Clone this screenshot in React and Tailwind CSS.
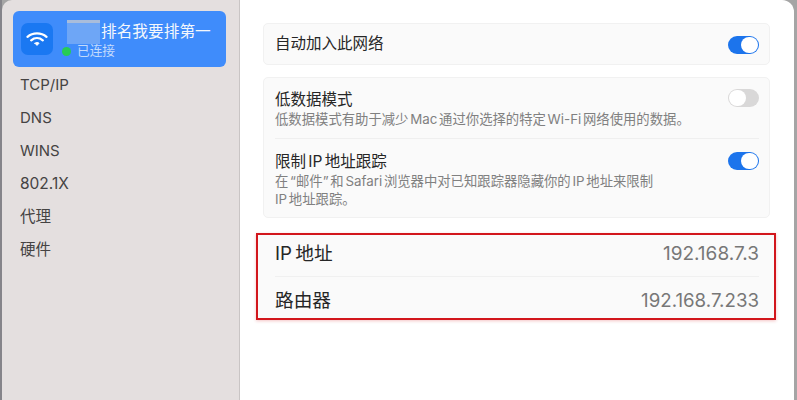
const cjk = "font-['Inter','Noto_Sans_CJK_SC',sans-serif]";

function Toggle({ on }) {
  return (
    <div className={`mt-px flex h-[18px] w-[31px] shrink-0 items-center rounded-full p-px ${on ? 'justify-end bg-[#1c74ec]' : 'justify-start bg-[#d9d8d8]'}`}>
      <div className="h-4 w-[17px] rounded-full bg-white"></div>
    </div>
  );
}

function WifiIcon() {
  return (
    <svg width="22" height="15" viewBox="0 0 22 15" fill="none" stroke="white" strokeLinecap="round" strokeWidth="2.3">
      <path d="M1.5 4.8C6.8 .2 15.2 .2 20.5 4.8" />
      <path d="M5.2 8.3C8.6 5.5 13.4 5.5 16.8 8.3" />
      <path d="M8.9 11.2L11 13.4L13.1 11.2C11.8 10.3 10.2 10.3 8.9 11.2Z" fill="white" strokeWidth="1" />
    </svg>
  );
}

export default function App() {
  const menu = [
    { label: 'TCP/IP', size: 'text-[15px]' },
    { label: 'DNS', size: 'text-[15px]' },
    { label: 'WINS', size: 'text-[15px]' },
    { label: '802.1X', size: 'text-[15.5px]' },
    { label: '代理', size: 'text-[15.5px]' },
    { label: '硬件', size: 'text-[15.5px]' },
  ];

  return (
    <div className={`flex h-[400px] w-[797px] overflow-hidden bg-[#a5a5a5] [word-spacing:-2px] ${cjk}`}>
      <div className="h-full w-[2px] shrink-0 bg-[#85848a]"></div>

      {/* Sidebar */}
      <div className="h-full w-[238px] shrink-0 rounded-tl-[10px] border-r border-[#c9c5c5] bg-[#e4dfdf] pl-[11px] pr-[13px] pt-[11px]">
        <div className="flex h-[56px] items-center rounded-[6px] bg-[#3f8cfb] pl-[8px]">
          <div className="flex h-[32px] w-[32px] items-center justify-center rounded-[7px] bg-[#1a78f2]">
            <WifiIcon />
          </div>
          <div className="ml-[9px] flex flex-col">
            <div className="flex h-[24px] items-center text-[15.7px] leading-none text-[#f4f7fb]">
              <span className="mb-[1px] ml-[5px] mr-[1px] h-[24px] w-[33px] bg-[#6ea6f6]">
                <span className="block h-[3px] bg-[#a9bddb]"></span>
              </span>
              排名我要排第一
            </div>
            <div className="flex h-[14px] items-center text-[12.7px] leading-none text-[#c4dbfb]">
              <span className="mr-[6px] h-[9px] w-[9px] rounded-full bg-[#27cc55]"></span>
              已连接
            </div>
          </div>
        </div>
        <div className="flex flex-col pl-[7px] pt-[1.5px] text-[#454343]">
          {menu.map((item) => (
            <div key={item.label} className={`flex h-[33px] items-center ${item.size}`}>{item.label}</div>
          ))}
        </div>
      </div>

      {/* Main panel */}
      <div className="flex h-full w-[554px] shrink-0 flex-col rounded-tr-[12px] bg-white pl-[23px] pr-[24px] pt-[23px]">
        <div className="flex h-[42px] items-center justify-between rounded-[5px] border border-[#f1f1f1] bg-[#fafafa] pl-[11px] pr-[10px] text-[15.5px] text-[#262626]">
          <span>自动加入此网络</span>
          <Toggle on />
        </div>

        <div className="mt-[12px] flex h-[141px] flex-col rounded-[5px] border border-[#f1f1f1] bg-[#fafafa] pl-[11px] pr-[10px]">
          <div className="flex h-[61px] justify-between border-b border-[#efefef] pt-[10px]">
            <div>
              <div className="text-[15.5px] leading-[23px] text-[#262626]">低数据模式</div>
              <div className="text-[13.35px] leading-[17px] text-[#808080]">低数据模式有助于减少 Mac 通过你选择的特定 Wi-Fi 网络使用的数据。</div>
            </div>
            <Toggle />
          </div>
          <div className="flex justify-between pt-[12px]">
            <div>
              <div className="text-[15.5px] leading-[22px] text-[#262626]">限制 IP 地址跟踪</div>
              <div className="text-[13.35px] leading-[17.5px] text-[#808080]">
                在 “邮件” 和 Safari 浏览器中对已知跟踪器隐藏你的 IP 地址来限制
                <br />
                IP 地址跟踪。
              </div>
            </div>
            <Toggle on />
          </div>
        </div>

        {/* Highlighted rows */}
        <div className="ml-[-7px] mr-[-6px] mt-[15px] flex h-[87px] flex-col border-2 border-[#d2161c] bg-[#fafafa] pl-[17px] pr-[15px] text-[18.7px] shadow-[0_1px_3px_rgba(210,22,28,0.25)]">
          <div className="flex h-[42px] items-center justify-between border-b border-[#f0f0f0] pb-[3px]">
            <span className="text-[#262626]">IP 地址</span>
            <span className="text-[19px] text-[#777777]">192.168.7.3</span>
          </div>
          <div className="flex flex-1 items-center justify-between pt-[7px]">
            <span className="text-[#262626]">路由器</span>
            <span className="text-[#777777]">192.168.7.233</span>
          </div>
        </div>
      </div>
    </div>
  );
}
